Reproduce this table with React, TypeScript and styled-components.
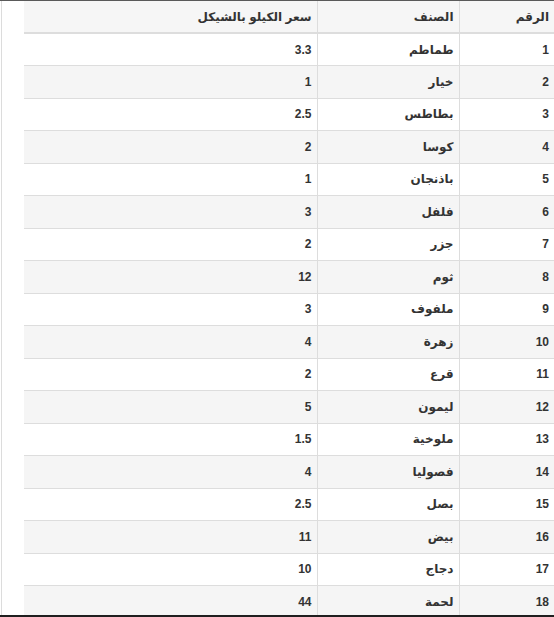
import React from "react";
import styled, { createGlobalStyle } from "styled-components";

const GlobalStyle = createGlobalStyle`
  html, body { margin: 0; padding: 0; background: #ffffff; }
  body { font-family: "Liberation Sans", "DejaVu Sans", Arial, sans-serif; overflow: hidden; }
`;

const Page = styled.div`
  position: relative;
  width: 554px;
  height: 617px;
  overflow: hidden;
  border-top: 1px solid #5a5a5a;
  box-sizing: border-box;
  padding-left: 24px;
  background: #fff;
  &::before {
    content: "";
    position: absolute;
    left: 1px;
    top: 0;
    bottom: 0;
    width: 1px;
    background: #dcdcdc;
  }
  &::after {
    content: "";
    position: absolute;
    left: 0;
    right: 0;
    bottom: 0;
    height: 2px;
    background: #1f1f1f;
  }
`;

const Table = styled.table`
  direction: rtl;
  width: 530px;
  border-collapse: collapse;
  table-layout: fixed;
  font-size: 12px;
  font-weight: bold;
  color: #333;
`;

const HeadCell = styled.th<{ $last?: boolean }>`
  height: 31px;
  padding: 0 5px;
  text-align: right;
  background: #f6f6f6;
  border-bottom: 2px solid #dddddd;
  border-left: ${(p) => (p.$last ? "none" : "1px solid #dddddd")};
  font-weight: bold;
`;

const Row = styled.tr<{ $striped: boolean }>`
  height: 32.5px;
  background: ${(p) => (p.$striped ? "#f5f5f5" : "#ffffff")};
`;

const Cell = styled.td<{ $last?: boolean }>`
  padding: 0 5px;
  text-align: right;
  border-top: 1px solid #dddddd;
  border-left: ${(p) => (p.$last ? "none" : "1px solid #dddddd")};
  white-space: nowrap;
`;

const rows: [number, string, string][] = [
  [1, "طماطم", "3.3"],
  [2, "خيار", "1"],
  [3, "بطاطس", "2.5"],
  [4, "كوسا", "2"],
  [5, "باذنجان", "1"],
  [6, "فلفل", "3"],
  [7, "جزر", "2"],
  [8, "ثوم", "12"],
  [9, "ملفوف", "3"],
  [10, "زهرة", "4"],
  [11, "قرع", "2"],
  [12, "ليمون", "5"],
  [13, "ملوخية", "1.5"],
  [14, "فصوليا", "4"],
  [15, "بصل", "2.5"],
  [16, "بيض", "11"],
  [17, "دجاج", "10"],
  [18, "لحمة", "44"],
];

export default function App() {
  return (
    <>
      <GlobalStyle />
      <Page>
        <Table>
          <colgroup>
            <col style={{ width: 95 }} />
            <col style={{ width: 142 }} />
            <col />
          </colgroup>
          <thead>
            <tr>
              <HeadCell>الرقم</HeadCell>
              <HeadCell>الصنف</HeadCell>
              <HeadCell $last>سعر الكيلو بالشيكل</HeadCell>
            </tr>
          </thead>
          <tbody>
            {rows.map(([n, name, price]) => (
              <Row key={n} $striped={n % 2 === 0}>
                <Cell>{n}</Cell>
                <Cell>{name}</Cell>
                <Cell $last>{price}</Cell>
              </Row>
            ))}
          </tbody>
        </Table>
      </Page>
    </>
  );
}
